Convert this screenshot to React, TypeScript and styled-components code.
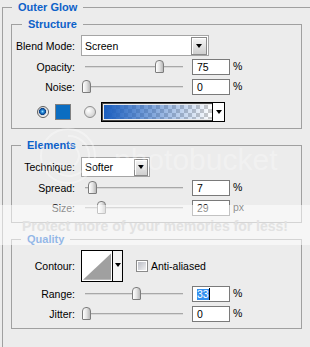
import styled, { createGlobalStyle } from "styled-components";

const GlobalStyle = createGlobalStyle`
  html, body {
    margin: 0;
    padding: 0;
    background: #ececec;
  }
`;

const Page = styled.div`
  position: relative;
  width: 310px;
  height: 347px;
  overflow: hidden;
  background: #ececec;
  padding-left: 2px;
  box-sizing: border-box;
  font-family: "Liberation Sans", Arial, sans-serif;
  font-size: 10.5px;
  color: #000;
`;

const LINE = "#a0a0a0";

// group box = header row (edge, title, line) + body with the other three sides
const Group = styled.section<{ $mt: number; $w: number }>`
  margin-top: ${(p) => p.$mt}px;
  width: ${(p) => p.$w}px;
`;

const Head = styled.div`
  display: flex;
  height: 14px;
`;

const HeadEdge = styled.div<{ $w: number }>`
  width: ${(p) => p.$w}px;
  box-sizing: border-box;
  margin-top: 7px;
  border-top: 1px solid ${LINE};
  border-left: 1px solid ${LINE};
`;

const Title = styled.span`
  padding: 0 6px;
  font-weight: bold;
  font-size: 11px;
  line-height: 14px;
  color: #0c61c9;
`;

const HeadLine = styled.div<{ $open?: boolean }>`
  flex: 1;
  margin-top: 7px;
  border-top: 1px solid ${LINE};
  border-right: ${(p) => (p.$open ? "none" : `1px solid ${LINE}`)};
`;

const Body = styled.div<{ $pt: number; $pb: number; $open?: boolean }>`
  padding: ${(p) => p.$pt}px 0 ${(p) => p.$pb}px ${(p) => (p.$open ? 8 : 0)}px;
  border-left: 1px solid ${LINE};
  border-right: ${(p) => (p.$open ? "none" : `1px solid ${LINE}`)};
  border-bottom: ${(p) => (p.$open ? "none" : `1px solid ${LINE}`)};
  min-height: ${(p) => (p.$open ? "400px" : "0")};
`;

const Row = styled.div<{ $mt?: number }>`
  display: flex;
  align-items: center;
  min-height: 20px;
  margin-top: ${(p) => p.$mt ?? 0}px;
`;

const Label = styled.span`
  width: 63px;
  margin-right: 6px;
  text-align: right;
  white-space: nowrap;
`;

const Slider = styled.div`
  position: relative;
  width: 105px;
  height: 16px;
  margin-right: 6px;
`;

const Track = styled.div`
  position: absolute;
  left: 4px;
  right: 3px;
  top: 7px;
  height: 1px;
  background: #a8a8a8;
  border-bottom: 1px solid #d8d8d8;
`;

const Thumb = styled.div`
  position: absolute;
  top: 1px;
  width: 9px;
  height: 13px;
  box-sizing: border-box;
  border: 1px solid #7c7c7c;
  border-radius: 4px 4px 1px 1px;
  background: linear-gradient(to right, #ffffff, #e4e4e4 50%, #b8b8b8);
`;

const NumField = styled.div`
  width: 38px;
  height: 16px;
  box-sizing: border-box;
  border: 1px solid #7a7a7a;
  background: #fff;
  padding-left: 4px;
  line-height: 14px;
  display: flex;
  align-items: center;
`;

const Unit = styled.span`
  margin-left: 3px;
  margin-top: -3px;
`;

const Select = styled.div<{ $w: number; $h: number }>`
  width: ${(p) => p.$w}px;
  height: ${(p) => p.$h}px;
  box-sizing: border-box;
  border: 1px solid #a5a5a5;
  background: #fff;
  display: flex;
  align-items: center;
  padding: 0 1px 0 3px;
`;

const DropButton = styled.div<{ $w: number; $h: number }>`
  margin-left: auto;
  width: ${(p) => p.$w}px;
  height: ${(p) => p.$h}px;
  box-sizing: border-box;
  border: 1px solid #8a8a8a;
  box-shadow: inset 1px 1px 0 #fff;
  background: linear-gradient(#f6f6f6, #cfcfcf);
  display: flex;
  align-items: center;
  justify-content: center;
`;

const Arrow = styled.span`
  width: 0;
  height: 0;
  border-left: 3px solid transparent;
  border-right: 3px solid transparent;
  border-top: 4px solid #000;
`;

const ColorRow = styled(Row)`
  height: 20px;
  padding-left: 25px;
`;

const Radio = styled.span<{ $on?: boolean; $ml?: number }>`
  margin-left: ${(p) => p.$ml ?? 0}px;
  width: 12px;
  height: 12px;
  box-sizing: border-box;
  border-radius: 50%;
  border: 1px solid ${(p) => (p.$on ? "#5e5e5e" : "#8e8e8e")};
  background: ${(p) =>
    p.$on
      ? "radial-gradient(circle at 45% 45%, #9be0ff 0, #2488d8 1.5px, #0a3f86 3.2px, #d8d8d8 3.8px, #f4f4f4 5px)"
      : "radial-gradient(circle at 35% 35%, #ffffff, #c4c4c4)"};
`;

const Swatch = styled.span`
  width: 16px;
  height: 16px;
  box-sizing: border-box;
  margin-left: 6px;
  border: 1px solid #808080;
  background: #0b6dc1;
`;

const GradientPicker = styled.div`
  margin-left: 5px;
  width: 124px;
  height: 20px;
  box-sizing: border-box;
  border: 1px solid #000;
  box-shadow: inset 0 0 0 1px #444;
  display: flex;
  padding: 2px 0 2px 2px;
`;

const GradientFill = styled.div`
  flex: 1;
  background: linear-gradient(to right, #1c5fbf, rgba(28, 95, 191, 0) 100%),
    conic-gradient(#cbcbcb 25%, #ffffff 0 50%, #cbcbcb 0 75%, #ffffff 0) 0 0 / 8px 8px;
`;

const PickerArrow = styled.div`
  width: 11px;
  border-left: 1px solid #000;
  margin: -2px 0;
  background: #fff;
  display: flex;
  align-items: center;
  justify-content: center;
`;

const Contour = styled.div`
  width: 42px;
  height: 32px;
  box-sizing: border-box;
  border: 1px solid #000;
  display: flex;
  background: #fff;
`;

const ContourPreview = styled.svg`
  display: block;
  margin: 1px;
`;

const ContourArrow = styled.div`
  width: 10px;
  border-left: 1px solid #000;
  background: #f4f4f4;
  display: flex;
  align-items: flex-start;
  justify-content: center;
  padding-top: 12px;
  box-sizing: border-box;
`;

const Checkbox = styled.span`
  margin-left: 13px;
  width: 12px;
  height: 12px;
  box-sizing: border-box;
  border: 1px solid #8a8a8a;
  box-shadow: inset 0 0 0 1px #fff;
  background: linear-gradient(135deg, #b4b6c0, #f6f6f6);
`;

const CheckLabel = styled.span`
  margin-left: 3px;
`;

const Selected = styled.span`
  background: #3390f0;
  color: #fff;
  line-height: 11px;
`;

const Caret = styled.span`
  width: 1px;
  height: 12px;
  background: #000;
`;

const Band = styled.div`
  position: absolute;
  left: 0;
  right: 0;
  top: 205px;
  height: 40px;
  background: rgba(255, 255, 255, 0.55);
  display: flex;
  align-items: center;
  justify-content: center;
  pointer-events: none;
`;

const BandText = styled.span`
  font-family: "Liberation Sans", Arial, sans-serif;
  font-weight: bold;
  font-size: 14px;
  color: #e2e2e2;
  padding-top: 2px;
`;

const Logo = styled.div`
  position: absolute;
  left: 38px;
  top: 126px;
  display: flex;
  align-items: center;
  gap: 16px;
  pointer-events: none;
`;

const LogoText = styled.span`
  font-family: "Liberation Sans", Arial, sans-serif;
  font-size: 30px;
  color: rgba(255, 255, 255, 0.3);
  margin-top: 8px;
`;

type SliderRowProps = {
  label: string;
  value: React.ReactNode;
  pos: number;
  unit: string;
  mt?: number;
};

function SliderRow({ label, value, pos, unit, mt }: SliderRowProps) {
  return (
    <Row $mt={mt}>
      <Label>{label}</Label>
      <Slider>
        <Track />
        <Thumb style={{ left: pos }} />
      </Slider>
      <NumField>{value}</NumField>
      <Unit>{unit}</Unit>
    </Row>
  );
}

export default function App() {
  return (
    <Page>
      <GlobalStyle />
      <Group $mt={0} $w={340}>
        <Head>
          <HeadEdge $w={10} />
          <Title>Outer Glow</Title>
          <HeadLine $open />
        </Head>
        <Body $pt={3} $pb={0} $open>
          <Group $mt={0} $w={291}>
            <Head>
              <HeadEdge $w={11} />
              <Title>Structure</Title>
              <HeadLine />
            </Head>
            <Body $pt={4} $pb={6}>
              <Row>
                <Label>Blend Mode:</Label>
                <Select $w={128} $h={21}>
                  Screen
                  <DropButton $w={16} $h={18}>
                    <Arrow />
                  </DropButton>
                </Select>
              </Row>
              <SliderRow label="Opacity:" value="75" pos={74} unit="%" mt={1} />
              <SliderRow label="Noise:" value="0" pos={1} unit="%" />
              <ColorRow $mt={5}>
                <Radio $on />
                <Swatch />
                <Radio $ml={13} />
                <GradientPicker>
                  <GradientFill />
                  <PickerArrow>
                    <Arrow />
                  </PickerArrow>
                </GradientPicker>
              </ColorRow>
            </Body>
          </Group>

          <Group $mt={9} $w={291}>
            <Head>
              <HeadEdge $w={10} />
              <Title>Elements</Title>
              <HeadLine />
            </Head>
            <Body $pt={5} $pb={4}>
              <Row>
                <Label>Technique:</Label>
                <Select $w={69} $h={20}>
                  Softer
                  <DropButton $w={14} $h={17}>
                    <Arrow />
                  </DropButton>
                </Select>
              </Row>
              <SliderRow label="Spread:" value="7" pos={7} unit="%" mt={1} />
              <SliderRow label="Size:" value="29" pos={16} unit="px" />
            </Body>
          </Group>

          <Group $mt={9} $w={291}>
            <Head>
              <HeadEdge $w={10} />
              <Title>Quality</Title>
              <HeadLine />
            </Head>
            <Body $pt={4} $pb={4}>
              <Row>
                <Label>Contour:</Label>
                <Contour>
                  <ContourPreview width="29" height="28" viewBox="0 0 29 28">
                    <rect width="29" height="28" fill="#fff" />
                    <polygon points="0,28 29,28 29,1" fill="#a0a0a0" />
                  </ContourPreview>
                  <ContourArrow>
                    <Arrow />
                  </ContourArrow>
                </Contour>
                <Checkbox />
                <CheckLabel>Anti-aliased</CheckLabel>
              </Row>
              <SliderRow
                label="Range:"
                value={
                  <>
                    <Selected>33</Selected>
                    <Caret />
                  </>
                }
                pos={51}
                unit="%"
                mt={2}
              />
              <SliderRow label="Jitter:" value="0" pos={1} unit="%" />
            </Body>
          </Group>
        </Body>
      </Group>

      <Logo>
        <svg width="60" height="60" viewBox="0 0 60 60">
          <g fill="none" stroke="rgba(255,255,255,0.35)" strokeWidth="2">
            <circle cx="30" cy="30" r="27" />
            <path d="M30 10 A20 20 0 1 1 12 36" />
            <path d="M30 18 A12 12 0 1 1 20 38" />
          </g>
        </svg>
        <LogoText>photobucket</LogoText>
      </Logo>

      <Band>
        <BandText>Protect more of your memories for less!</BandText>
      </Band>
    </Page>
  );
}
